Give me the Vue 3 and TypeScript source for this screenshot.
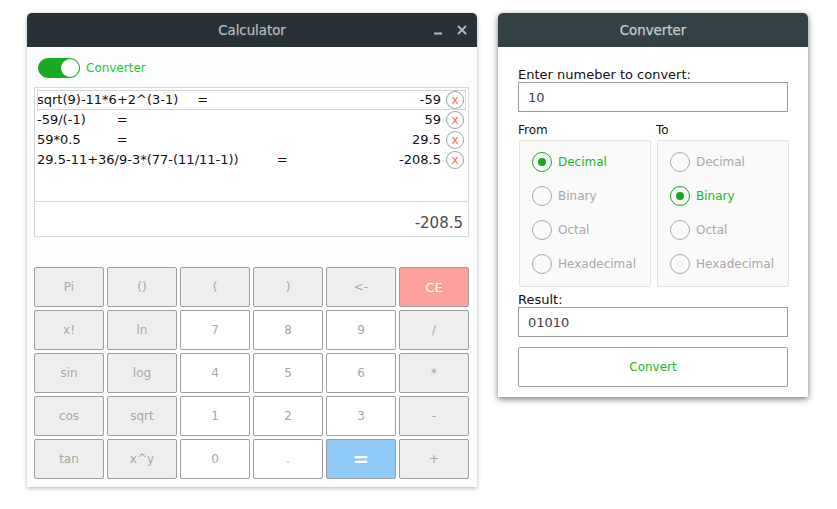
<script setup lang="ts">
import { ref } from 'vue'

interface HistoryRow {
  expr: string
  gap: number
  result: string
}

const bases = ['Decimal', 'Binary', 'Octal', 'Hexadecimal']
const from = ref('Decimal')
const to = ref('Binary')

const history: HistoryRow[] = [
  { expr: 'sqrt(9)-11*6+2^(3-1)', gap: 19, result: '-59' },
  { expr: '-59/(-1)', gap: 31, result: '59' },
  { expr: '59*0.5', gap: 36, result: '29.5' },
  { expr: '29.5-11+36/9-3*(77-(11/11-1))', gap: 38, result: '-208.5' },
]

const keys: { label: string; kind: string }[] = [
  { label: 'Pi', kind: 'fn' }, { label: '()', kind: 'fn' }, { label: '(', kind: 'fn' },
  { label: ')', kind: 'fn' }, { label: '<-', kind: 'fn' }, { label: 'CE', kind: 'clear' },
  { label: 'x!', kind: 'fn' }, { label: 'ln', kind: 'fn' }, { label: '7', kind: 'num' },
  { label: '8', kind: 'num' }, { label: '9', kind: 'num' }, { label: '/', kind: 'fn' },
  { label: 'sin', kind: 'fn' }, { label: 'log', kind: 'fn' }, { label: '4', kind: 'num' },
  { label: '5', kind: 'num' }, { label: '6', kind: 'num' }, { label: '*', kind: 'fn' },
  { label: 'cos', kind: 'fn' }, { label: 'sqrt', kind: 'fn' }, { label: '1', kind: 'num' },
  { label: '2', kind: 'num' }, { label: '3', kind: 'num' }, { label: '-', kind: 'fn' },
  { label: 'tan', kind: 'fn' }, { label: 'x^y', kind: 'fn' }, { label: '0', kind: 'num' },
  { label: '.', kind: 'num' }, { label: '=', kind: 'equals' }, { label: '+', kind: 'fn' },
]
</script>

<template>
  <div class="desktop">
    <section class="window calc">
      <header class="titlebar calc-bar">
        <span>Calculator</span>
        <div class="controls">
          <svg width="10" height="10" viewBox="0 0 10 10"><path d="M0 8.5h8" stroke="#b4b8ba" stroke-width="2" /></svg>
          <svg width="10" height="10" viewBox="0 0 10 10"><path d="M1 1l8 8M9 1l-8 8" stroke="#b4b8ba" stroke-width="2" /></svg>
        </div>
      </header>
      <div class="calc-body">
        <div class="toggle-row">
          <span class="toggle"><span class="knob"></span></span>
          <span class="toggle-label">Converter</span>
        </div>
        <div class="display">
          <div class="history">
            <div v-for="(row, i) in history" :key="i" class="history-row" :class="{ selected: i === 0 }">
              <span class="expr">{{ row.expr }}</span>
              <span class="eq" :style="{ marginLeft: row.gap + 'px' }">=</span>
              <span class="res">{{ row.result }}</span>
              <span class="del">x</span>
            </div>
          </div>
          <div class="current">-208.5</div>
        </div>
        <div class="keypad">
          <button v-for="k in keys" :key="k.label" class="key" :class="k.kind">{{ k.label }}</button>
        </div>
      </div>
    </section>

    <section class="window conv">
      <header class="titlebar conv-bar"><span>Converter</span></header>
      <div class="conv-body">
        <label class="field-label">Enter numeber to convert:</label>
        <div class="field">10</div>
        <div class="groups">
          <div class="group">
            <div class="group-title">From</div>
            <div class="radio-box">
              <div v-for="b in bases" :key="b" class="radio" :class="{ on: from === b }">
                <span class="dot"></span>{{ b }}
              </div>
            </div>
          </div>
          <div class="group">
            <div class="group-title">To</div>
            <div class="radio-box">
              <div v-for="b in bases" :key="b" class="radio" :class="{ on: to === b }">
                <span class="dot"></span>{{ b }}
              </div>
            </div>
          </div>
        </div>
        <label class="field-label result-label">Result:</label>
        <div class="field">01010</div>
        <button class="convert">Convert</button>
      </div>
    </section>
  </div>
</template>

<style>
html, body { background: #fff; }
</style>

<style scoped>
.desktop {
  display: flex;
  align-items: flex-start;
  gap: 21px;
  padding: 13px 0 0 27px;
  width: 837px;
  height: 509px;
  box-sizing: border-box;
  overflow: hidden;
  font-family: "DejaVu Sans", sans-serif;
}

.window {
  border-radius: 5px 5px 0 0;
  background: #fcfdff;
}

.calc {
  width: 450px;
  height: 474px;
  box-shadow: 0 1px 4px rgba(0, 0, 0, 0.3);
}

.conv {
  width: 310px;
  height: 384px;
  background: #fff;
  box-shadow: 0 2px 6px rgba(0, 0, 0, 0.55);
}

.titlebar {
  position: relative;
  height: 34px;
  display: flex;
  align-items: center;
  justify-content: center;
  border-radius: 5px 5px 0 0;
  font-size: 13.33px;
  -webkit-text-stroke: 0.25px currentColor;
  color: #b5b9bb;
}

.calc-bar { background: #283136; }
.conv-bar { background: #344147; color: #c6cbcd; }

.controls {
  position: absolute;
  right: 10px;
  top: 12px;
  display: flex;
  gap: 13px;
}

.calc-body { padding: 11px 8px 0 7px; }

.toggle-row {
  display: flex;
  align-items: center;
  gap: 6px;
  padding-left: 4px;
  height: 20px;
}

.toggle {
  width: 42px;
  height: 20px;
  box-sizing: border-box;
  border: 1px solid #1aab20;
  border-radius: 10px;
  background: #1aab20;
  display: flex;
  justify-content: flex-end;
}

.knob {
  width: 18px;
  height: 18px;
  border-radius: 50%;
  background: #fff;
}

.toggle-label { font-size: 12px; color: #22cc2a; }

.display {
  margin-top: 9px;
  height: 150px;
  box-sizing: border-box;
  border: 1px solid #d3dbd8;
  background: #fff;
  display: flex;
  flex-direction: column;
}

.history {
  height: 114px;
  box-sizing: border-box;
  padding: 2px 2px 0 2px;
  border-bottom: 1px solid #d3dbd8;
}

.history-row {
  display: flex;
  align-items: center;
  height: 20px;
  box-sizing: border-box;
  width: 427px;
  font-size: 13px;
  color: #111;
  line-height: 20px;
  white-space: pre;
}

.history-row.selected {
  width: 429px;
  padding-right: 2px;
  outline: 1px solid #d2d5d4;
  outline-offset: -1px;
}

.eq { display: inline-block; }
.res { margin-left: auto; margin-right: 5px; }

.del {
  width: 18px;
  height: 18px;
  box-sizing: border-box;
  border: 1px solid #a0a0a0;
  border-radius: 50%;
  display: flex;
  align-items: center;
  justify-content: center;
  font-size: 12px;
  color: #ff6a55;
  line-height: 1;
  flex: none;
}

.current {
  flex: 1;
  display: flex;
  align-items: center;
  justify-content: flex-end;
  padding: 7px 5px 0 0;
  font-size: 15px;
  color: #464c52;
}

.keypad {
  margin-top: 30px;
  display: grid;
  grid-template-columns: repeat(6, 70px);
  grid-auto-rows: 40px;
  gap: 3px;
}

.key {
  padding: 0;
  border: 1px solid #9e9e9e;
  border-radius: 2px;
  background: #fff;
  font-family: inherit;
  font-size: 12px;
  color: #a8a8a8;
}

.key.fn { background: #eeeeee; }
.key.clear { background: #ffa19b; color: #fff; font-size: 13px; }
.key.equals { background: #90caf9; color: #fff; font-size: 20px; font-weight: 700; }

.conv-body { padding: 21px 20px 0 20px; }

.field-label {
  display: block;
  height: 14px;
  line-height: 14px;
  font-size: 13px;
  color: #111;
}

.field {
  margin-top: 0;
  height: 30px;
  box-sizing: border-box;
  border: 1px solid #9c9c9c;
  padding-left: 9px;
  display: flex;
  align-items: center;
  font-size: 13px;
  color: #3d4248;
  background: #fff;
}

.groups {
  display: flex;
  gap: 5px;
  margin-top: 10px;
}

.group { width: 133px; }

.group-title {
  height: 16px;
  line-height: 16px;
  font-size: 12px;
  color: #111;
}

.radio-box {
  margin: 2px 0 0 1px;
  width: 132px;
  height: 147px;
  box-sizing: border-box;
  border: 1px solid #e3e3e3;
  border-radius: 2px;
  background: #fafafa;
  padding: 11px 0 0 12px;
}

.radio {
  display: flex;
  align-items: center;
  gap: 6px;
  height: 20px;
  margin-bottom: 14px;
  font-size: 12px;
  color: #a9a9a9;
  white-space: nowrap;
}

.radio:last-child { margin-bottom: 0; }

.dot {
  width: 20px;
  height: 20px;
  box-sizing: border-box;
  border: 1px solid #a9a9a9;
  border-radius: 50%;
  flex: none;
  display: flex;
  align-items: center;
  justify-content: center;
}

.radio.on { color: #22b82a; }
.radio.on .dot { border-color: #19a61f; }

.radio.on .dot::after {
  content: "";
  width: 8px;
  height: 8px;
  border-radius: 50%;
  background: #19a61f;
}

.result-label { margin-top: 6px; }

.convert {
  display: block;
  width: 100%;
  height: 40px;
  margin-top: 10px;
  border: 1px solid #9c9c9c;
  border-radius: 2px;
  background: #fff;
  font-family: inherit;
  font-size: 12px;
  color: #22b82a;
}
</style>
